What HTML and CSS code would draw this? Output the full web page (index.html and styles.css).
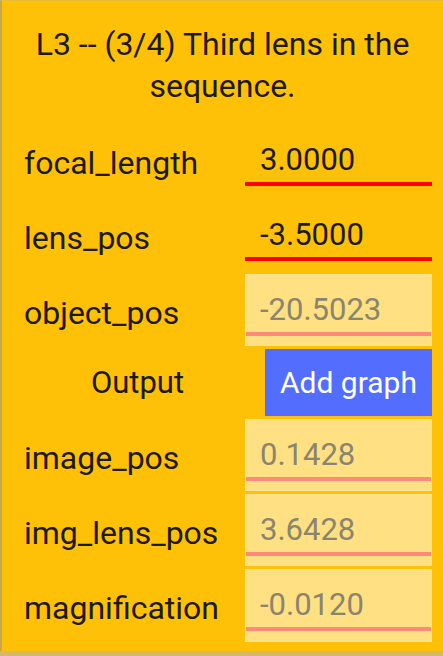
FILE: index.html
```html
<!DOCTYPE html>
<html>
<head>
<meta charset="utf-8">
<link rel="stylesheet" href="styles.css">
</head>
<body>
<div class="panel">
  <div class="title">L3 -- (3/4) Third lens in the sequence.</div>
  <div class="rows">
    <div class="label">focal_length</div>
    <div class="field field-edit"><span class="value">3.0000</span></div>

    <div class="label">lens_pos</div>
    <div class="field field-edit"><span class="value">-3.5000</span></div>

    <div class="label">object_pos</div>
    <div class="field field-out"><span class="value">-20.5023</span></div>

    <div class="label label-output">Output</div>
    <div class="btn-cell"><button class="btn">Add graph</button></div>

    <div class="label">image_pos</div>
    <div class="field field-out"><span class="value">0.1428</span></div>

    <div class="label">img_lens_pos</div>
    <div class="field field-out"><span class="value">3.6428</span></div>

    <div class="label">magnification</div>
    <div class="field field-out"><span class="value">-0.0120</span></div>
  </div>
</div>
</body>
</html>
```

FILE: styles.css
```css
html, body {
  margin: 0;
  padding: 0;
}
body {
  width: 443px;
  height: 656px;
  background: #d6b964;
  font-family: Roboto, "Liberation Sans", sans-serif;
  overflow: hidden;
}
.panel {
  box-sizing: border-box;
  height: 651px;
  background: #ffc107;
  border-left: 2px solid #c4a657;
  border-top: 1px solid #e9bd36;
  padding: 0 11px 0 22px;
}
.title {
  margin-top: 22px;
  margin-left: -22px;
  margin-right: -11px;
  padding: 0 30px;
  text-align: center;
  font-size: 32px;
  line-height: 42px;
  color: #1e1a10;
}
.rows {
  margin-top: 17px;
  display: grid;
  grid-template-columns: 1fr 187px;
  grid-template-rows: 72px 72px 72px 67px 72px 72px 73px;
  row-gap: 3px;
}
.label {
  font-size: 32px;
  line-height: 32px;
  padding-top: 23px;
  color: #1e1a10;
  white-space: nowrap;
}
.label-output {
  text-align: center;
  padding-left: 6px;
  padding-top: 1px;
  display: flex;
  align-items: center;
  justify-content: center;
  font-size: 31px;
}
.field {
  box-sizing: border-box;
  position: relative;
  padding: 20px 0 0 15px;
  font-size: 31px;
  line-height: 32px;
}
.field::after {
  content: "";
  position: absolute;
  left: 0;
  right: 0;
  top: 58px;
  height: 4px;
}
.field-edit {
  color: #1e1a10;
}
.field-edit::after {
  background: #ff0000;
}
.field-out {
  background: #ffe082;
  border: 1px solid #ffe596;
  color: #8a8570;
  padding-top: 19px;
  padding-left: 14px;
}
.field-out::after {
  top: 57px;
  background: #ff8a7c;
}
.btn-cell {
  display: flex;
  justify-content: flex-end;
}
.btn {
  width: 167px;
  height: 67px;
  border: none;
  margin: 0;
  padding: 0;
  background: #536dfe;
  color: #ffffff;
  font-family: Roboto, "Liberation Sans", sans-serif;
  font-size: 30px;
}
```
